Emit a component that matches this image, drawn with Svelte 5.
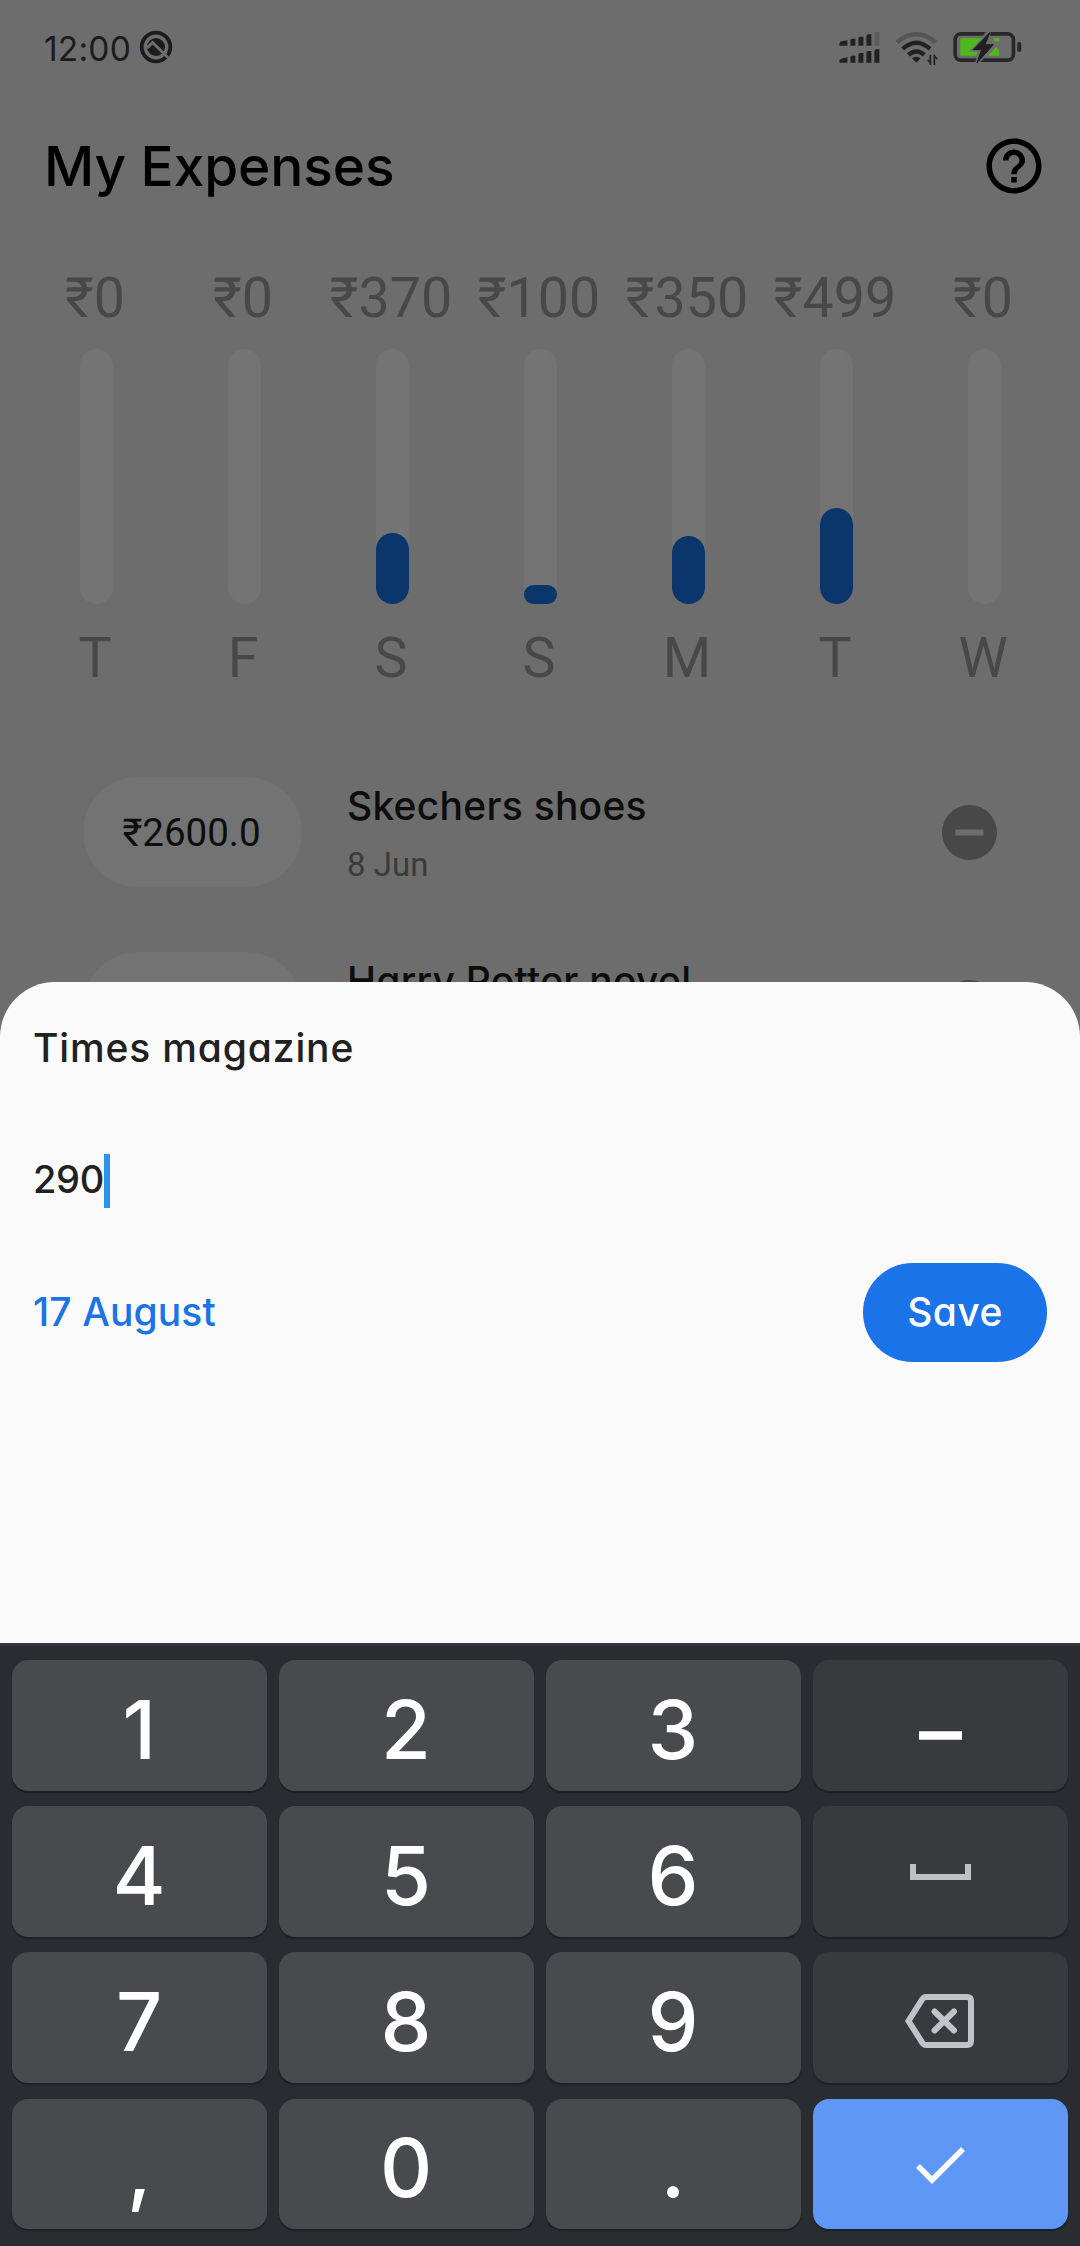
<script lang="ts">
  const days = [
    { amount: '₹0', fill: 0, day: 'T' },
    { amount: '₹0', fill: 0, day: 'F' },
    { amount: '₹370', fill: 71.5, day: 'S' },
    { amount: '₹100', fill: 19.5, day: 'S' },
    { amount: '₹350', fill: 68, day: 'M' },
    { amount: '₹499', fill: 96.5, day: 'T' },
    { amount: '₹0', fill: 0, day: 'W' },
  ];
  const expenses = [
    { price: '₹2600.0', name: 'Skechers shoes', date: '8 Jun' },
    { price: '', name: 'Harry Potter novel', date: '' },
  ];
  const keys = ['1', '2', '3', 'minus', '4', '5', '6', 'space', '7', '8', '9', 'delete', ',', '0', '.', 'done'];
  const special = ['minus', 'space', 'delete', 'done'];
</script>

<div class="screen">
  <div class="home">
    <div class="status">
      <span class="clock">12:00</span>
      <svg class="app-mark" viewBox="-17 -17 34 34">
        <circle r="14.3" fill="none" stroke="#1c1c1c" stroke-width="3.8" />
        <circle r="9" fill="#1c1c1c" />
        <path d="M-9 1L-3.5-4.5L14 12.5" fill="none" stroke="#6d6d6d" stroke-width="3" />
      </svg>
      <svg class="indicators" viewBox="110 84 560 112">
        <g fill="#222">
          <path d="M117 129L122 124L141 121V137H117ZM150 119L154 116H165V137H150ZM174 114L178 110H189V137H174ZM198 107L202 103H213V137H198Z" />
          <path d="M117 180L122 176L141 172V188H117ZM150 170L154 167H165V188H150ZM174 163L178 159H189V188H174ZM198 157L202 153H213V188H198ZM222 152L226 148H237V188H222Z" />
        </g>
        <path d="M222 99L226 96H237V137H222Z" fill="#5c5c5c" />
        <g fill="none" stroke-width="13">
          <path d="M290 127Q348 79 406 127" stroke="#555" />
          <path d="M307 147Q348 110 389 147" stroke="#222" />
          <path d="M324 165Q348 144 372 165" stroke="#222" />
        </g>
        <path d="M335 175Q348 166 361 175L348 188Z" fill="#222" />
        <path d="M390 164V195M402 164V195M382 180L390 188M402 168L411 177" stroke="#222" stroke-width="5" />
        <rect x="464.500" y="101.500" width="175" height="79" rx="17" fill="none" stroke="#2a272b" stroke-width="11" />
        <path d="M569 90L514 153H540L529 192L582 130H556Z" fill="#6d6d6d" stroke="#6d6d6d" stroke-width="10" />
        <path d="M480 115H546L510 150V155H532L528 167H480ZM580 115H597V124H582ZM588 141L597 152V167H562Z" fill="#4fb81c" />
        <path d="M569 97L519 149H544L530 189L579 134H554Z" fill="#211f24" stroke="#211f24" stroke-width="3" />
        <rect x="651" y="126" width="12" height="30" rx="5" fill="#2a272b" />
      </svg>
    </div>

    <header>
      <h1>My Expenses</h1>
      <svg class="help" viewBox="0 0 24 24">
        <path d="M11 18h2v-2h-2v2zm1-16C6.480 2 2 6.480 2 12s4.480 10 10 10 10-4.480 10-10S17.520 2 12 2zm0 18c-4.410 0-8-3.590-8-8s3.590-8 8-8 8 3.590 8 8-3.590 8-8 8zm0-14c-2.210 0-4 1.790-4 4h2c0-1.100.9-2 2-2s2 .9 2 2c0 2-3 1.750-3 5h2c0-2.250 3-2.500 3-5 0-2.210-1.790-4-4-4z" />
      </svg>
    </header>

    <div class="chart">
      {#each days as d}
        <div class="col">
          <span class="label">{d.amount}</span>
          <div class="track"><div class="fill" style="height: {d.fill}px"></div></div>
          <span class="label">{d.day}</span>
        </div>
      {/each}
    </div>

    <div class="list">
      {#each expenses as e}
        <div class="row">
          <div class="pill">{e.price}</div>
          <div class="info">
            <span class="name">{e.name}</span>
            <span class="date">{e.date}</span>
          </div>
          <svg class="remove" viewBox="0 0 55 55">
            <circle cx="27.500" cy="27.500" r="27.500" fill="#484848" />
            <rect x="13.500" y="24.500" width="28" height="6" fill="#6d6d6d" />
          </svg>
        </div>
      {/each}
    </div>
  </div>

  <div class="sheet">
    <div class="field"><span class="t-title">Times magazine</span></div>
    <div class="field"><span class="t-amount">290</span><i class="caret"></i></div>
    <div class="field actions">
      <span class="t-date">17 August</span>
      <button><span>Save</span></button>
    </div>
  </div>

  <div class="keyboard">
    {#each keys as k}
      <div class="key" class:side={special.includes(k)} class:done={k === 'done'}>
        {#if k === 'minus'}
          <svg viewBox="0 0 255 130"><path d="M106 75.500H149" stroke="#fff" stroke-width="8.500" /></svg>
        {:else if k === 'space'}
          <svg viewBox="0 0 255 130"><path d="M100 58V71H155V58" fill="none" stroke="#bdc1c6" stroke-width="6" /></svg>
        {:else if k === 'delete'}
          <svg viewBox="0 0 255 130">
            <g fill="none" stroke="#c0c3c7" stroke-width="6">
              <path d="M113 44H154Q158 44 158 48V88Q158 92 154 92H113Q111 92 109.500 90L95.500 68L109.500 46Q111 44 113 44Z" />
              <path d="M121.500 58.500L141 77.500M141 58.500L121.500 77.500" stroke-linecap="round" />
            </g>
          </svg>
        {:else if k === 'done'}
          <svg viewBox="0 0 255 130"><path d="M105 67L119 81L150 50" fill="none" stroke="#fff" stroke-width="5.500" /></svg>
        {:else}
          {k}
        {/if}
      </div>
    {/each}
  </div>
</div>

<style>
  :global(body) { margin: 0; background: #6d6d6d; }
  .screen {
    width: 1080px;
    height: 2246px;
    display: flex;
    flex-direction: column;
    overflow: hidden;
    background: #6d6d6d;
    font-family: Inter, sans-serif;
  }
  .home { height: 982px; flex: none; overflow: hidden; }
  svg { display: block; }

  .status { height: 98px; display: flex; align-items: center; padding: 0 56px 0 44px; box-sizing: border-box; }
  .clock { width: 95px; font-size: 33.5px; line-height: 40px; letter-spacing: 0.2px; color: #1c1c1c; }
  .app-mark { width: 34px; height: 34px; margin-bottom: 4px; }
  .indicators { width: 186.7px; height: 37.3px; margin-left: auto; margin-bottom: 4px; }

  header { height: 136px; display: flex; align-items: center; justify-content: space-between; padding: 0 33px 0 44px; }
  h1 { margin: 0; font-size: 55px; font-weight: 500; line-height: 70px; letter-spacing: -0.1px; color: #000; font-feature-settings: 'cv11'; }
  .help { width: 66px; height: 66px; }

  .chart { display: grid; grid-template-columns: repeat(7, 148px); padding: 33px 22px 0; }
  .col { display: flex; flex-direction: column; align-items: center; }
  .label { font: 400 55.5px/64px Roboto, sans-serif; color: #484848; padding-right: 2px; white-space: nowrap; }
  .track {
    width: 33px; height: 255px; margin: 18px 0 23px; border-radius: 17px;
    background: #747474; display: flex; align-items: flex-end;
  }
  .fill { width: 33px; border-radius: 17px; background: #0a366c; }

  .list { padding: 53.5px 83px 0; }
  .row { height: 175px; display: flex; align-items: center; }
  .pill {
    width: 219px; height: 110px; border-radius: 55px; background: #737373; box-sizing: border-box; padding-right: 2px;
    font: 400 38.5px/111px Roboto, sans-serif; text-align: center; color: #0d0d0d;
  }
  .info { margin: 7px 0 0 45px; height: 116px; display: flex; flex-direction: column; }
  .name { font-size: 39px; font-weight: 500; line-height: 56px; letter-spacing: 0.25px; color: #0d0d0d; font-feature-settings: 'cv11'; }
  .date { font: 400 33px/62px Roboto, sans-serif; color: #3b3b3b; }
  .remove { width: 55px; height: 55px; margin-left: auto; }

  .sheet {
    height: 661px; flex: none; box-sizing: border-box; padding: 0 33px;
    background: #fafafa; border-radius: 55px 55px 0 0; font-size: 39px; font-weight: 500;
    font-feature-settings: 'cv11'; color: #212121;
  }
  .field { height: 132px; display: flex; align-items: center; }
  .field span { padding-bottom: 2px; }
  .t-title { letter-spacing: 0.85px; }
  .t-amount { font-size: 38px; font-weight: 450; letter-spacing: -0.3px; }
  .caret { width: 6px; height: 54px; margin-top: 1px; background: #2b94ea; }
  .t-date { letter-spacing: 0.1px; }
  .actions { justify-content: space-between; color: #1a73e8; }
  button {
    width: 184px; height: 99px; border: 0; border-radius: 50px; padding: 0;
    background: #1a73e8; color: #fff; font: inherit; font-feature-settings: inherit; letter-spacing: 0.4px;
    display: flex; align-items: center; justify-content: center;
  }

  .keyboard {
    height: 603px; flex: none; box-sizing: border-box; padding: 14px 12px 16px;
    border-top: 3px solid #34383b; background: #292c30;
    display: grid; grid-template-columns: repeat(4, 1fr); grid-template-rows: repeat(4, 130.5px);
    column-gap: 11.5px; row-gap: 15.7px;
  }
  .key {
    box-sizing: border-box; height: 130.5px;
    display: flex; align-items: center; justify-content: center;
    border-radius: 16px; background: #484a4d; box-shadow: 0 2px 1px #1e2024;
    font-size: 81px; line-height: 122px; font-weight: 500; color: #fff; padding: 9px 1px 0 0;
  }
  .side { background: #383a3e; padding: 0; }
  .side svg { width: 255px; height: 130px; }
  .done { background: #5e97f6; }
</style>
